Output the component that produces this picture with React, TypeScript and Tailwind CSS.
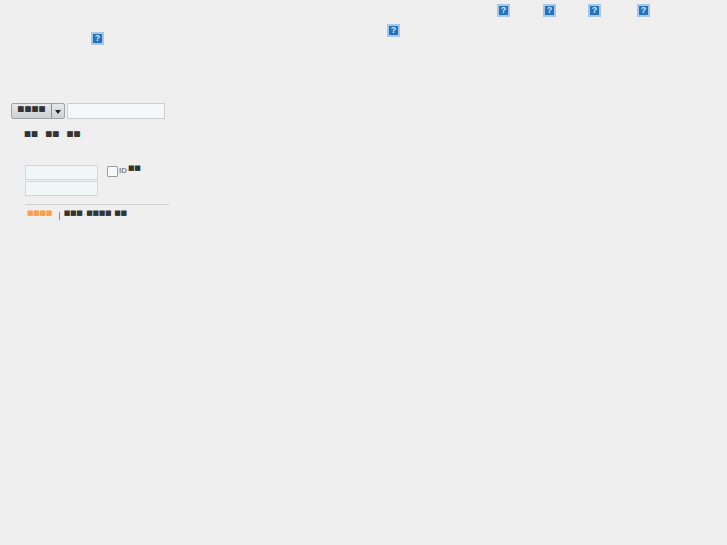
const tofu = "font-['DejaVu_Sans',sans-serif] text-[7.5px] leading-none";
const tofuSmall = "font-['DejaVu_Sans',sans-serif] text-[7px] leading-none tracking-[-0.4px]";

function HelpIcon({ className = "" }: { className?: string }) {
  return (
    <span
      className={`flex h-[13px] w-[13px] shrink-0 items-center justify-center border-2 border-[#a9c6e6] bg-[#2273bb] font-['Liberation_Sans',sans-serif] text-[9px] leading-none font-bold text-[#dbe9f5] ${className}`}
    >
      ?
    </span>
  );
}

export default function App() {
  return (
    <div className="flex h-[545px] w-[727px] flex-col overflow-hidden bg-[#efefef] pt-[4px]">
      <div className="flex h-[13px]">
        <HelpIcon className="ml-[497px]" />
        <HelpIcon className="ml-[33px]" />
        <HelpIcon className="ml-[32px]" />
        <HelpIcon className="ml-[36px]" />
      </div>
      <HelpIcon className="mt-[7px] ml-[387px]" />
      <HelpIcon className="-mt-[5px] ml-[91px]" />

      <div className="mt-[58px] ml-[11px] flex items-center gap-[2px]">
        <div className="flex h-[16px] w-[54px] overflow-hidden rounded-[2px] border border-[#a3a3a3] bg-gradient-to-b from-[#e6e8ea] to-[#cdd0d3]">
          <span className={`flex w-[39px] justify-center pt-[1px] text-[#333] ${tofu}`}>■■■■</span>
          <span className="flex flex-1 items-center justify-center border-l border-[#8f8f8f]">
            <span className="mt-[1px] h-0 w-0 border-x-[3.5px] border-t-[4px] border-x-transparent border-t-[#222]" />
          </span>
        </div>
        <div className="h-[16px] w-[98px] border border-[#cfcfcf] bg-[#f4f8fa]" />
      </div>

      <div className={`mt-[11px] ml-[24px] flex gap-[7px] text-[#333] ${tofu}`}>
        <span>■■</span>
        <span>■■</span>
        <span>■■</span>
      </div>

      <div className="mt-[27px] ml-[25px] flex">
        <div className="flex w-[73px] flex-col gap-[1px]">
          <div className="h-[15px] border border-[#d4d8da] bg-[#f1f6f8]" />
          <div className="h-[15px] border border-[#d4d8da] bg-[#f1f6f8]" />
        </div>
        <div className="ml-[9px] flex items-start">
          <span className="mt-[1px] h-[11px] w-[11px] rounded-[1px] border border-[#9c9c9c] bg-[#f6f8f9]" />
          <span className="mt-[1px] ml-[1px] font-['Liberation_Sans',sans-serif] text-[8px] leading-[10px] font-bold text-[#888]">ID</span>
          <span className={`ml-[1px] text-[#333] ${tofuSmall}`}>■■</span>
        </div>
      </div>

      <div className="mt-[8px] ml-[25px] h-px w-[144px] bg-[#d5d2d0]" />

      <div className="mt-[5px] ml-[27px] flex items-start">
        <span className={`text-[#f79f4e] ${tofuSmall}`}>■■■■</span>
        <span className="mt-[2px] ml-[7px] h-[8px] w-px bg-[#888]" />
        <span className={`ml-[4px] text-[#333] ${tofuSmall}`}>■■■</span>
        <span className={`ml-[1px] text-[#999] ${tofuSmall}`}>.</span>
        <span className={`ml-[1px] text-[#333] ${tofuSmall}`}>■■■■</span>
        <span className={`ml-[3px] text-[#333] ${tofuSmall}`}>■■</span>
      </div>
    </div>
  );
}
